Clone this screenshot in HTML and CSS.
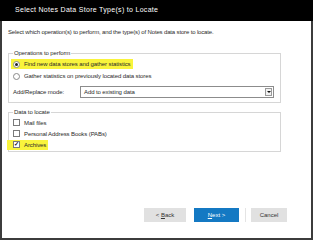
FILE: index.html
```html
<!DOCTYPE html>
<html lang="en">
<head>
  <meta charset="UTF-8" />
  <title>Select Notes Data Store Type(s) to Locate</title>
  <link rel="stylesheet" href="styles.css">
</head>
<body>
  <div class="window">
    <div class="titlebar">Select Notes Data Store Type(s) to Locate</div>

    <div class="content">
      <p class="intro">Select which operation(s) to perform, and the type(s) of Notes data store to locate.</p>

      <fieldset class="group">
        <legend>Operations to perform</legend>
        <div class="option"><span class="mark hl"><span class="radio checked"></span>Find new data stores and gather statistics</span></div>
        <div class="option"><span class="mark"><span class="radio"></span>Gather statistics on previously located data stores</span></div>
        <div class="mode-row">
          <span class="mode-label">Add/Replace mode:</span>
          <div class="select">
            <span class="select-value">Add to existing data</span>
            <span class="select-arrow"></span>
          </div>
        </div>
      </fieldset>

      <fieldset class="group group-data">
        <legend>Data to locate</legend>
        <div class="option small"><span class="mark"><span class="check"></span>Mail files</span></div>
        <div class="option small"><span class="mark"><span class="check"></span>Personal Address Books (PABs)</span></div>
        <div class="option small"><span class="mark hl wide"><span class="check checked">&#10003;</span>Archives</span></div>
      </fieldset>
    </div>

    <div class="footer">
      <button class="btn btn-back">&lt; <u>B</u>ack</button>
      <button class="btn btn-next"><u>N</u>ext &gt;</button>
      <span class="sep"></span>
      <button class="btn btn-cancel">Cancel</button>
    </div>
  </div>
</body>
</html>
```

FILE: styles.css
```css
body {
  margin: 0;
  background: #fff;
  font-family: "Liberation Sans", Arial, sans-serif;
  color: #2b2b2b;
}
.window {
  width: 313px;
  height: 240px;
  box-sizing: border-box;
  border: 2px solid #3c3c3c;
  border-top: 0;
  display: flex;
  flex-direction: column;
}
.titlebar {
  background: #000;
  color: #fff;
  height: 21px;
  line-height: 20px;
  padding-left: 15px;
  font-size: 7px;
  letter-spacing: 0.3px;
  margin: 0 -2px;
  padding-right: 2px;
}
.content {
  padding: 7px 30px 0 6px;
  font-size: 6px;
  letter-spacing: -0.1px;
}
.intro {
  margin: 0;
  line-height: 8px;
  letter-spacing: -0.15px;
}
.group {
  margin: 13px 0 0 0;
  border: 1px solid #d6d6d6;
  padding: 1px 4px 4px 4px;
}
.group legend {
  padding: 0 1px;
  margin-left: 0;
  line-height: 8px;
  font-size: 6px;
}
.group-data {
  margin-top: 5px;
  padding-bottom: 1px;
}
.option {
  height: 12px;
  display: flex;
  align-items: center;
}
.option.small {
  height: 11px;
}
.mark {
  display: flex;
  align-items: center;
  gap: 4px;
  height: 10px;
  padding: 0 2px 0 0;
}
.mark.hl {
  background: #f9f43c;
  margin-left: -2px;
  padding-left: 2px;
}
.mark.wide {
  margin-left: -6px;
  padding-left: 6px;
}
.radio {
  width: 5px;
  height: 5px;
  border: 1px solid #8a8a8a;
  border-radius: 50%;
  background: #fff;
  position: relative;
}
.radio.checked::after {
  content: "";
  position: absolute;
  left: 1px;
  top: 1px;
  width: 3px;
  height: 3px;
  border-radius: 50%;
  background: #222;
}
.check {
  width: 5px;
  height: 5px;
  border: 1px solid #7a7a7a;
  background: #fff;
  font-size: 6px;
  line-height: 5px;
  text-align: center;
  color: #111;
  font-weight: bold;
}
.mode-row {
  display: flex;
  align-items: center;
  margin-top: 4px;
  height: 12px;
}
.mode-label {
  width: 67px;
}
.select {
  flex: 1;
  height: 12px;
  box-sizing: border-box;
  border: 1px solid #8c8c8c;
  display: flex;
  align-items: center;
  padding-left: 3px;
  margin-right: 2px;
}
.select-value {
  flex: 1;
}
.select-arrow {
  width: 7px;
  height: 8px;
  box-sizing: border-box;
  border: 1px solid #9a9a9a;
  background: #f2f2f2;
  margin-right: 1px;
  position: relative;
}
.select-arrow::after {
  content: "";
  position: absolute;
  left: 1px;
  top: 2px;
  border-left: 2px solid transparent;
  border-right: 2px solid transparent;
  border-top: 2px solid #111;
}
.footer {
  margin-top: auto;
  display: flex;
  justify-content: flex-end;
  align-items: center;
  padding: 0 24px 16px 0;
}
.btn {
  height: 14px;
  border: 0;
  background: #e1e1e1;
  color: #333;
  font-family: "Liberation Sans", Arial, sans-serif;
  font-size: 6px;
  padding: 0;
}
.btn-back {
  width: 42px;
}
.btn-next {
  width: 45px;
  margin-left: 8px;
  background: #1479c3;
  color: #fff;
}
.btn-cancel {
  width: 36px;
}
.sep {
  width: 1px;
  height: 14px;
  background: #e4e4e4;
  margin: 0 5px 0 6px;
}
```
